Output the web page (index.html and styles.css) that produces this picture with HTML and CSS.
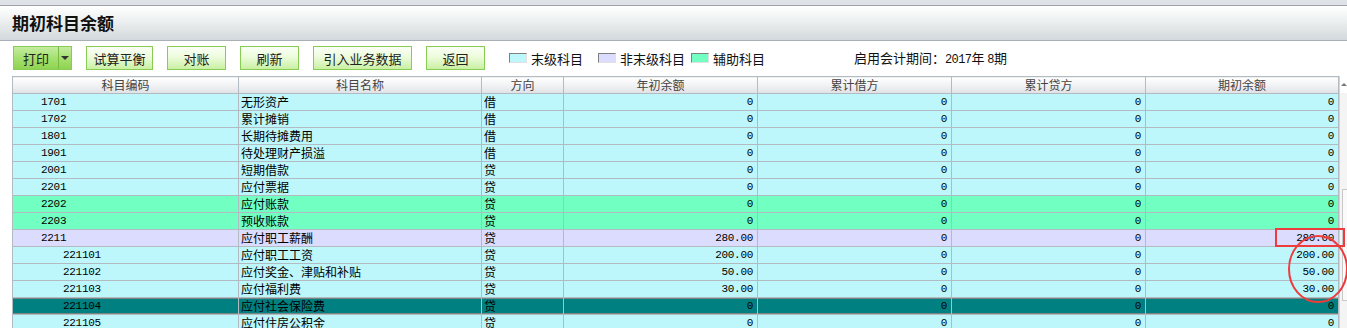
FILE: index.html
```html
<!DOCTYPE html>
<html lang="zh-CN">
<head>
    <meta charset="UTF-8">
    <title>期初科目余额</title>
    <link rel="stylesheet" href="styles.css">
</head>
<body>
    <div class="top-strip"></div>
    <div class="title-bar">期初科目余额</div>

    <div class="toolbar">
        <div class="btn-split">
            <span class="btn-main">打印</span>
            <span class="btn-drop"><i class="caret"></i></span>
        </div>
        <span class="btn w67">试算平衡</span>
        <span class="btn">对账</span>
        <span class="btn">刷新</span>
        <span class="btn w99">引入业务数据</span>
        <span class="btn">返回</span>

        <div class="legend first">
            <span class="swatch leaf"></span>末级科目
        </div>
        <div class="legend wide">
            <span class="swatch parent"></span>非末级科目
        </div>
        <div class="legend">
            <span class="swatch aux"></span>辅助科目
        </div>
        <div class="period">启用会计期间：<span class="num">2017</span>年 <span class="num">8</span>期</div>
    </div>

    <div class="grid-wrap">
        <table class="grid">
            <colgroup>
                <col style="width:226px">
                <col style="width:243px">
                <col style="width:82px">
                <col style="width:194px">
                <col style="width:194px">
                <col style="width:194px">
                <col style="width:193px">
            </colgroup>
            <thead>
                <tr>
                    <th>科目编码</th>
                    <th>科目名称</th>
                    <th>方向</th>
                    <th>年初余额</th>
                    <th>累计借方</th>
                    <th>累计贷方</th>
                    <th>期初余额</th>
                </tr>
            </thead>
            <tbody>
                <tr class="leaf"><td class="code">1701</td><td>无形资产</td><td>借</td><td class="amt">0</td><td class="amt">0</td><td class="amt">0</td><td class="amt">0</td></tr>
                <tr class="leaf"><td class="code">1702</td><td>累计摊销</td><td>借</td><td class="amt">0</td><td class="amt">0</td><td class="amt">0</td><td class="amt">0</td></tr>
                <tr class="leaf"><td class="code">1801</td><td>长期待摊费用</td><td>借</td><td class="amt">0</td><td class="amt">0</td><td class="amt">0</td><td class="amt">0</td></tr>
                <tr class="leaf"><td class="code">1901</td><td>待处理财产损溢</td><td>借</td><td class="amt">0</td><td class="amt">0</td><td class="amt">0</td><td class="amt">0</td></tr>
                <tr class="leaf"><td class="code">2001</td><td>短期借款</td><td>贷</td><td class="amt">0</td><td class="amt">0</td><td class="amt">0</td><td class="amt">0</td></tr>
                <tr class="leaf"><td class="code">2201</td><td>应付票据</td><td>贷</td><td class="amt">0</td><td class="amt">0</td><td class="amt">0</td><td class="amt">0</td></tr>
                <tr class="aux"><td class="code">2202</td><td>应付账款</td><td>贷</td><td class="amt">0</td><td class="amt">0</td><td class="amt">0</td><td class="amt">0</td></tr>
                <tr class="aux"><td class="code">2203</td><td>预收账款</td><td>贷</td><td class="amt">0</td><td class="amt">0</td><td class="amt">0</td><td class="amt">0</td></tr>
                <tr class="parent"><td class="code">2211</td><td>应付职工薪酬</td><td>贷</td><td class="amt">280.00</td><td class="amt">0</td><td class="amt">0</td><td class="amt">280.00</td></tr>
                <tr class="leaf"><td class="code sub">221101</td><td>应付职工工资</td><td>贷</td><td class="amt">200.00</td><td class="amt">0</td><td class="amt">0</td><td class="amt">200.00</td></tr>
                <tr class="leaf"><td class="code sub">221102</td><td>应付奖金、津贴和补贴</td><td>贷</td><td class="amt">50.00</td><td class="amt">0</td><td class="amt">0</td><td class="amt">50.00</td></tr>
                <tr class="leaf"><td class="code sub">221103</td><td>应付福利费</td><td>贷</td><td class="amt">30.00</td><td class="amt">0</td><td class="amt">0</td><td class="amt">30.00</td></tr>
                <tr class="selected"><td class="code sub">221104</td><td>应付社会保险费</td><td>贷</td><td class="amt">0</td><td class="amt">0</td><td class="amt">0</td><td class="amt">0</td></tr>
                <tr class="leaf"><td class="code sub">221105</td><td>应付住房公积金</td><td>贷</td><td class="amt">0</td><td class="amt">0</td><td class="amt">0</td><td class="amt">0</td></tr>
            </tbody>
        </table>

        <div class="vscroll">
            <div class="vscroll-up"><i class="up-caret"></i></div>
            <div class="vscroll-thumb"></div>
        </div>

        <!-- red marks drawn over the last column -->
        <div class="mark-box"></div>
        <svg class="mark-ring" width="64" height="72" viewBox="0 0 64 72">
            <ellipse cx="32" cy="36" rx="29" ry="33" fill="none" stroke="#ee3b3b" stroke-width="2"/>
        </svg>
    </div>
</body>
</html>
```

FILE: styles.css
```css
body {
    margin: 0;
    font-family: "Noto Sans CJK SC", "Noto Sans", sans-serif;
    font-size: 12px;
    color: #000;
    background: #fff;
    overflow: hidden;
}

.top-strip {
    height: 5px;
    background: #dfe2e6;
    border-bottom: 1px solid #9fa3a7;
}

.title-bar {
    height: 34px;
    line-height: 34px;
    padding-left: 12px;
    font-size: 17px;
    font-weight: bold;
    color: #111;
    background: linear-gradient(to bottom, #ffffff 0%, #f3f5f5 30%, #d2d9dc 100%);
    border-bottom: 1px solid #a9b0b5;
}

.toolbar {
    height: 35px;
    display: flex;
    align-items: flex-start;
    padding: 5px 0 0 13px;
    box-sizing: border-box;
    font-size: 13px;
}

.btn,
.btn-split {
    height: 24px;
    box-sizing: border-box;
    border: 1px solid #88cc55;
    margin-right: 14px;
    display: flex;
    align-items: center;
    justify-content: center;
    color: #222;
}

.btn {
    width: 59px;
    background: linear-gradient(to bottom, #fbfff6 0%, #eafbd8 50%, #c9f0a2 100%);
}

.btn.w67 {
    width: 67px;
}

.btn.w99 {
    width: 99px;
}

.btn-split {
    width: 59px;
    justify-content: flex-start;
    background: linear-gradient(to bottom, #c4eca0 0%, #a6e070 50%, #8fd352 100%);
}

.btn-main {
    width: 44px;
    height: 100%;
    display: flex;
    align-items: center;
    justify-content: center;
    border-right: 1px solid #77bb44;
}

.btn-drop {
    flex: 1;
    display: flex;
    align-items: center;
    justify-content: center;
}

.caret {
    width: 0;
    height: 0;
    border-left: 4px solid transparent;
    border-right: 4px solid transparent;
    border-top: 4px solid #333;
}

.legend {
    display: flex;
    align-items: center;
    height: 24px;
    width: 80px;
    color: #111;
}

.legend.first {
    margin-left: 10px;
    width: 89px;
}

.legend.wide {
    width: 93px;
}

.swatch {
    width: 16px;
    height: 8px;
    border-top: 1px solid #808080;
    border-left: 1px solid #808080;
    border-right: 1px solid #e0e0e0;
    border-bottom: 1px solid #e0e0e0;
    margin-right: 4px;
}

.swatch.leaf { background: #bdf7fc; }
.swatch.parent { background: #dcdcff; }
.swatch.aux { background: #72ffc2; }

.period {
    height: 24px;
    line-height: 24px;
    margin-left: 83px;
    color: #111;
}

.num {
    font-family: "Liberation Mono", monospace;
    font-size: 12px;
    letter-spacing: -0.6px;
}

.grid-wrap {
    position: relative;
    display: flex;
    margin-left: 12px;
}

.grid {
    table-layout: fixed;
    border-collapse: collapse;
    width: 1326px;
}

.grid th,
.grid td {
    height: 16px;
    padding: 0 3px;
    line-height: 16px;
    border: 1px solid #b2bac2;
    white-space: nowrap;
    overflow: hidden;
    font-weight: normal;
}

.grid th {
    color: #444;
    text-align: center;
    background: linear-gradient(to bottom, #ffffff 0%, #f1f2f4 50%, #dfe1e5 100%);
}

.grid td {
    padding-left: 2px;
}

.grid td.code {
    padding-left: 28px;
    font-family: "Liberation Mono", monospace;
    font-size: 11px;
    letter-spacing: -0.3px;
}

.grid td.code.sub {
    padding-left: 50px;
}

.grid td.amt {
    text-align: right;
    padding-right: 4px;
    font-family: "Liberation Mono", monospace;
    font-size: 11px;
    letter-spacing: -0.3px;
}

.grid tr.leaf td { background: #bdf7fc; }
.grid tr.parent td { background: #dcdcff; }
.grid tr.aux td { background: #72ffc2; }

.grid tr.selected td {
    background:
        linear-gradient(to right, #f28a8a 50%, transparent 50%) left top / 2px 1px repeat-x,
        linear-gradient(to right, #f28a8a 50%, transparent 50%) left bottom / 2px 1px repeat-x,
        #008080;
}

.vscroll {
    width: 9px;
    background: #f4f4f4;
    border-left: 1px solid #d4d4d4;
    position: relative;
}

.vscroll-up {
    height: 17px;
    display: flex;
    justify-content: center;
    align-items: center;
    background: #fff;
}

.up-caret {
    width: 0;
    height: 0;
    border-left: 3px solid transparent;
    border-right: 3px solid transparent;
    border-bottom: 3px solid #777;
}

.vscroll-thumb {
    position: absolute;
    left: 2px;
    right: 0;
    top: 113px;
    height: 110px;
    background: #fafafa;
    border: 1px solid #c8c8c8;
    border-right: none;
}

.mark-box {
    position: absolute;
    left: 1263px;
    top: 152px;
    width: 66px;
    height: 15px;
    border: 2px solid #ee3b3b;
}

.mark-ring {
    position: absolute;
    left: 1274px;
    top: 157px;
}
```
